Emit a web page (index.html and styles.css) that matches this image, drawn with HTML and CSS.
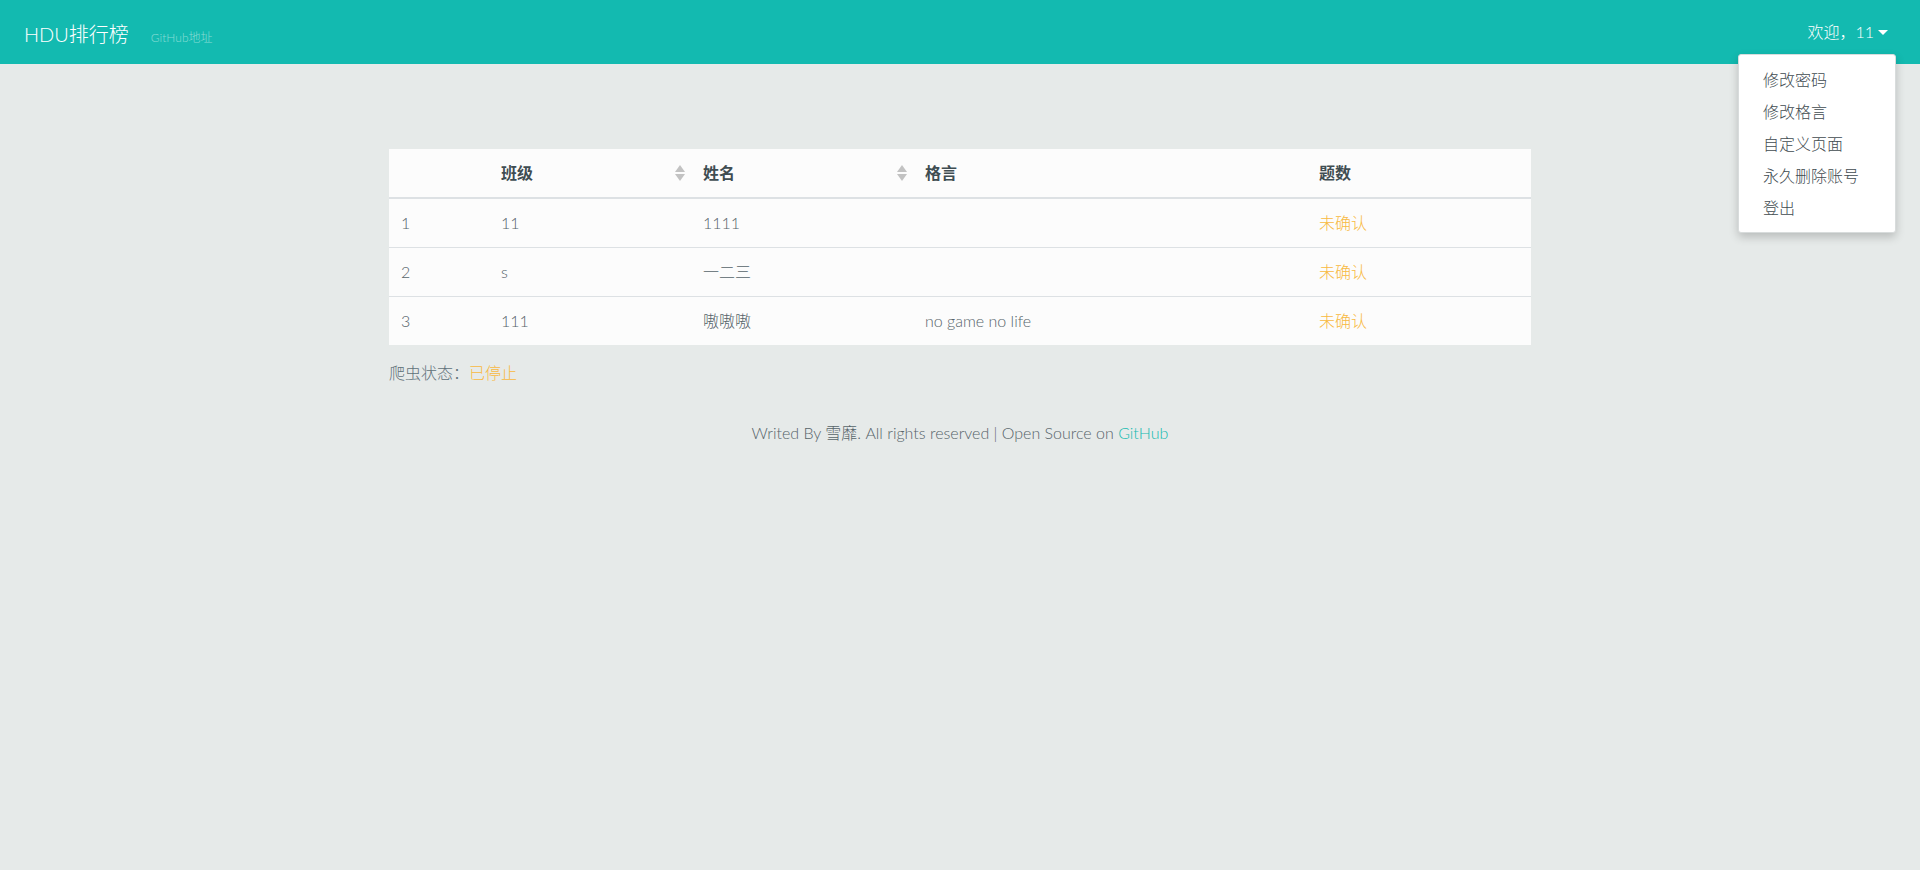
FILE: index.html
```html
<!DOCTYPE html>
<html lang="zh-CN">
<head>
    <meta charset="UTF-8">
    <meta name="viewport" content="width=device-width, initial-scale=1.0">
    <title>HDU排行榜</title>
    <link rel="stylesheet" href="styles.css">
</head>
<body>
    <nav class="navbar">
        <div class="brand-group">
            <a class="navbar-brand" href="#">HDU排行榜</a>
            <a class="github-link" href="#">GitHub地址</a>
        </div>
        <div class="user-menu">
            <a class="dropdown-toggle" href="#">欢迎，11<span class="caret"></span></a>
            <!-- 用户菜单 -->
            <div class="dropdown-menu">
                <a class="dropdown-item" href="#">修改密码</a>
                <a class="dropdown-item" href="#">修改格言</a>
                <a class="dropdown-item" href="#">自定义页面</a>
                <a class="dropdown-item" href="#">永久删除账号</a>
                <a class="dropdown-item" href="#">登出</a>
            </div>
        </div>
    </nav>

    <div class="container">
        <table class="rank-table">
            <thead>
                <tr>
                    <th class="col-rank"></th>
                    <th class="col-class sortable">班级<span class="sort-icon"><svg width="10" height="16" viewBox="0 0 10 16"><path d="M5 0 L10 7 L0 7 Z" fill="#c2c2c2"/><path d="M0 9 L10 9 L5 16 Z" fill="#c2c2c2"/></svg></span></th>
                    <th class="col-name sortable">姓名<span class="sort-icon"><svg width="10" height="16" viewBox="0 0 10 16"><path d="M5 0 L10 7 L0 7 Z" fill="#c2c2c2"/><path d="M0 9 L10 9 L5 16 Z" fill="#c2c2c2"/></svg></span></th>
                    <th class="col-motto">格言</th>
                    <th class="col-count">题数</th>
                </tr>
            </thead>
            <tbody>
                <tr>
                    <td>1</td>
                    <td>11</td>
                    <td>1111</td>
                    <td></td>
                    <td class="pending">未确认</td>
                </tr>
                <tr>
                    <td>2</td>
                    <td>s</td>
                    <td>一二三</td>
                    <td></td>
                    <td class="pending">未确认</td>
                </tr>
                <tr>
                    <td>3</td>
                    <td>111</td>
                    <td>嗷嗷嗷</td>
                    <td>no game no life</td>
                    <td class="pending">未确认</td>
                </tr>
            </tbody>
        </table>

        <p class="spider-status">爬虫状态：<span class="pending">已停止</span></p>
    </div>

    <footer class="footer">
        Writed By 雪靡. All rights reserved | Open Source on <a href="#">GitHub</a>
    </footer>
</body>
</html>
```

FILE: styles.css
```css
body {
    margin: 0;
    background: #e6eae9;
    font-family: "Lato", "Noto Sans CJK SC", sans-serif;
    font-weight: 300;
    font-size: 16px;
    line-height: 1.5;
    color: #56646a;
}

a {
    text-decoration: none;
}

.navbar {
    height: 64px;
    background: #13bab0;
    display: flex;
    align-items: center;
    justify-content: space-between;
    padding: 0 24px;
}

.brand-group {
    display: flex;
    align-items: baseline;
    padding-top: 4px;
}

.navbar-brand {
    color: #fff;
    font-size: 20px;
    margin-right: 22px;
}

.github-link {
    color: #8adcd5;
    font-size: 12px;
}

.user-menu {
    position: relative;
}

.dropdown-toggle {
    color: #fff;
    font-size: 16px;
    padding-right: 8px;
    display: flex;
    align-items: center;
}

.caret {
    display: inline-block;
    margin-left: 4px;
    border-top: 5px solid #fff;
    border-left: 5px solid transparent;
    border-right: 5px solid transparent;
}

.dropdown-menu {
    position: absolute;
    top: 34px;
    right: 0;
    width: 158px;
    box-sizing: border-box;
    padding: 9px 0 8px;
    background: #fff;
    border: 1px solid #d8dcdc;
    border-radius: 3px;
    box-shadow: 0 4px 10px rgba(0,0,0,0.2);
    z-index: 10;
}

.dropdown-item {
    display: block;
    padding: 0 24px;
    line-height: 32px;
    color: #414b50;
    font-size: 16px;
    white-space: nowrap;
}

.container {
    width: 1142px;
    margin: 85px auto 0;
}

.rank-table {
    width: 100%;
    border-collapse: collapse;
    background: #fcfcfc;
}

.rank-table th,
.rank-table td {
    padding: 12px;
    text-align: left;
    vertical-align: middle;
    line-height: 24px;
}

.rank-table th {
    font-weight: 700;
    color: #3f4d52;
    border-bottom: 2px solid #dde1e4;
}

.rank-table td {
    border-top: 1px solid #dde1e4;
    color: #56646a;
}

.rank-table tbody tr:first-child td {
    border-top: none;
}

.rank-table td.pending {
    color: #f8b940;
}

.col-rank { width: 76px; }
.col-class { width: 178px; }
.col-name { width: 198px; }
.col-motto { width: 370px; }

.sortable {
    position: relative;
}

.sort-icon {
    position: absolute;
    right: 6px;
    top: 50%;
    margin-top: -8px;
    height: 16px;
}

.sort-icon svg {
    display: block;
}

.pending {
    color: #f8b940;
}

.spider-status {
    margin: 16px 0 0;
    color: #5f7179;
}

.footer {
    text-align: center;
    margin-top: 36px;
    color: #56646a;
}

.footer a {
    color: #13bab0;
}
```
